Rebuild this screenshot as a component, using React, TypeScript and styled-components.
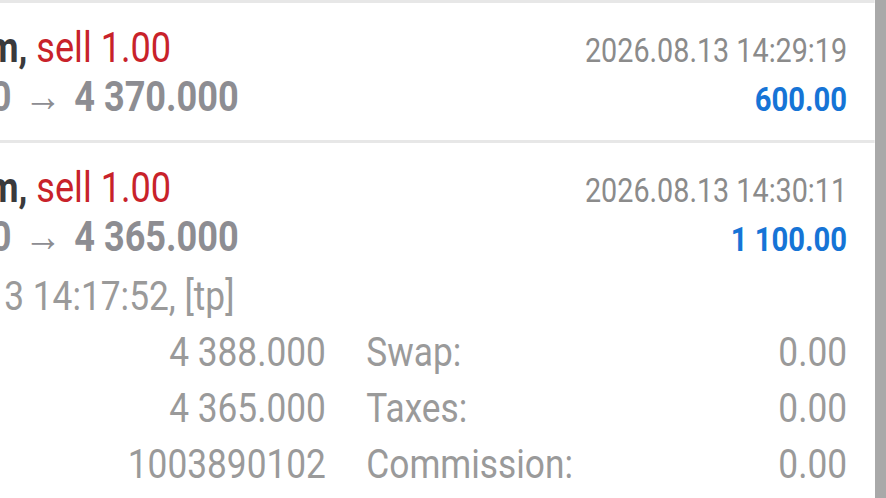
import React from 'react';
import styled, { createGlobalStyle } from 'styled-components';

const GlobalStyle = createGlobalStyle`
  html, body {
    margin: 0;
    padding: 0;
    height: 498px;
    overflow: hidden;
    background: #ffffff;
    font-family: Roboto, 'Noto Sans', sans-serif;
  }
`;

const Viewport = styled.div`
  display: flex;
  height: 498px;
  overflow: hidden;
  background: #ffffff;
`;

const Pane = styled.div`
  flex: 1;
  overflow: hidden;
`;

// the capture is horizontally squeezed, so the list is drawn wider and scaled down
const Squeeze = styled.div`
  width: 1017px;
  transform: scaleX(0.86);
  transform-origin: left top;
`;

const List = styled.div`
  margin-left: -178px;
`;

const Item = styled.div`
  border-top: 3px solid #e7e7e7;
  padding: 21px 32px 19px 0;
`;

const Line = styled.div`
  display: flex;
  justify-content: space-between;
  align-items: baseline;
  line-height: 48px;
  white-space: nowrap;
`;

const Title = styled.span`
  font-size: 42px;
`;

const Symbol = styled.span`
  font-weight: 700;
  color: #3a3a3c;
`;

const Side = styled.span<{ $buy?: boolean }>`
  color: ${(p) => (p.$buy ? '#1674d6' : '#c8222a')};
`;

const Prices = styled.span`
  font-size: 42px;
  font-weight: 700;
  color: #8d8d92;
`;

const Arrow = styled.span`
  display: inline-block;
  width: 73px;
  text-align: center;
  font-weight: 400;
  font-size: 44px;
`;

const Time = styled.span`
  font-size: 33.4px;
  line-height: 40px;
  color: #8b8b8b;
`;

const Profit = styled.span`
  font-size: 34px;
  line-height: 40px;
  font-weight: 700;
  color: #1674d6;
`;

const Details = styled.div`
  margin-top: 7px;
  font-size: 41px;
  line-height: 56px;
  color: #9a9a9a;
  white-space: nowrap;
`;

const Grid = styled.div`
  display: grid;
  grid-template-columns: 557px 1fr;
  column-gap: 47px;
`;

const Cell = styled.div`
  display: flex;
  justify-content: space-between;
`;

const Scrollbar = styled.div`
  width: 11px;
  flex-shrink: 0;
  background: #a9a9a9;
`;

type Trade = {
  symbol: string;
  side: string;
  volume: string;
  open: string;
  close: string;
  time: string;
  profit: string;
  details?: {
    openTime: string;
    sl: string;
    tp: string;
    id: string;
    swap: string;
    taxes: string;
    commission: string;
  };
};

const trades: Trade[] = [
  {
    symbol: 'XAUUSDm',
    side: 'sell',
    volume: '1.00',
    open: '4 376.000',
    close: '4 370.000',
    time: '2026.08.13 14:29:19',
    profit: '600.00',
  },
  {
    symbol: 'XAUUSDm',
    side: 'sell',
    volume: '1.00',
    open: '4 376.000',
    close: '4 365.000',
    time: '2026.08.13 14:30:11',
    profit: '1 100.00',
    details: {
      openTime: '2026.08.13 14:17:52, [tp]',
      sl: '4 388.000',
      tp: '4 365.000',
      id: '1003890102',
      swap: '0.00',
      taxes: '0.00',
      commission: '0.00',
    },
  },
];

const App: React.FC = () => {
  return (
    <>
      <GlobalStyle />
      <Viewport>
        <Pane>
          <Squeeze>
            <List>
              {trades.map((t, i) => (
                <Item key={i}>
                  <Line>
                    <Title>
                      <Symbol>{t.symbol}, </Symbol>
                      <Side $buy={t.side === 'buy'}>
                        {t.side} {t.volume}
                      </Side>
                    </Title>
                    <Time>{t.time}</Time>
                  </Line>
                  <Line>
                    <Prices>
                      {t.open}
                      <Arrow>→</Arrow>
                      {t.close}
                    </Prices>
                    <Profit>{t.profit}</Profit>
                  </Line>
                  {t.details && (
                    <Details>
                      <div>{t.details.openTime}</div>
                      <Grid>
                        <Cell>
                          <span>S / L:</span>
                          <span>{t.details.sl}</span>
                        </Cell>
                        <Cell>
                          <span>Swap:</span>
                          <span>{t.details.swap}</span>
                        </Cell>
                        <Cell>
                          <span>T / P:</span>
                          <span>{t.details.tp}</span>
                        </Cell>
                        <Cell>
                          <span>Taxes:</span>
                          <span>{t.details.taxes}</span>
                        </Cell>
                        <Cell>
                          <span>ID:</span>
                          <span>{t.details.id}</span>
                        </Cell>
                        <Cell>
                          <span>Commission:</span>
                          <span>{t.details.commission}</span>
                        </Cell>
                      </Grid>
                    </Details>
                  )}
                </Item>
              ))}
            </List>
          </Squeeze>
        </Pane>
        <Scrollbar />
      </Viewport>
    </>
  );
};

export default App;
